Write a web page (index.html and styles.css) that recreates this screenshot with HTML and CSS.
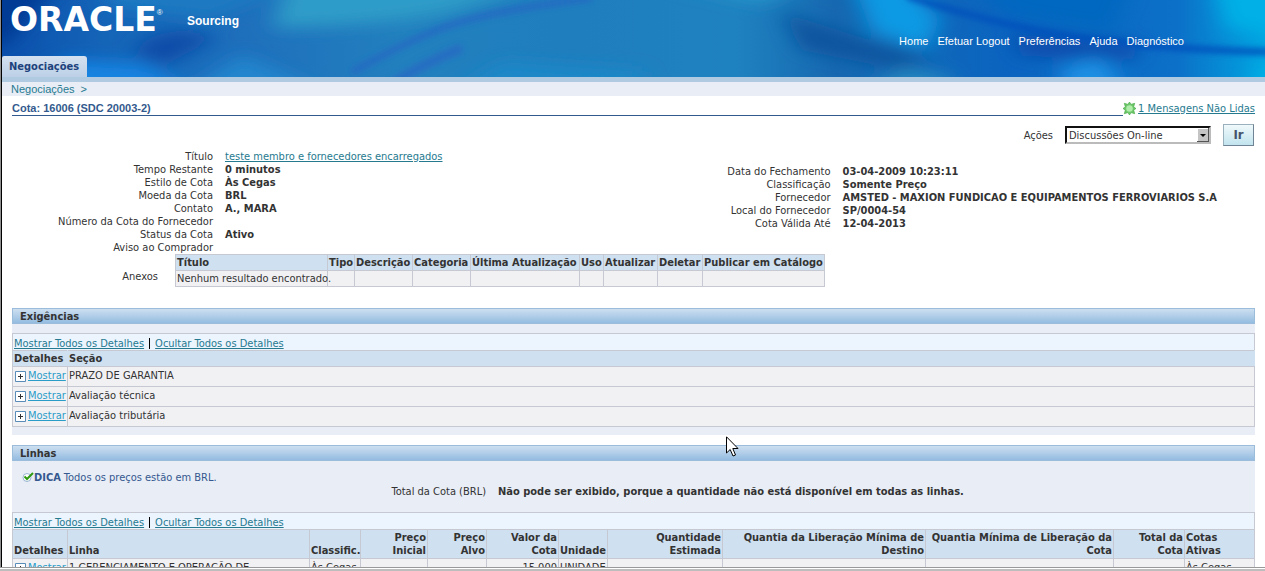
FILE: index.html
```
<!DOCTYPE html>
<html lang="pt-BR">
<head>
<meta charset="utf-8">
<title>Cota: 16006 (SDC 20003-2)</title>
<link rel="stylesheet" href="styles.css">
</head>
<body>
<div class="window">
<div class="viewport">
  <header class="banner">
    <svg class="banner-art" viewBox="0 0 1263 77" preserveAspectRatio="none" aria-hidden="true">
      <defs>
        <linearGradient id="base" x1="0" x2="1" y1="0" y2="0">
          <stop offset="0" stop-color="#0a50ac"/>
          <stop offset=".08" stop-color="#1464b8"/>
          <stop offset=".2" stop-color="#1f70bc"/>
          <stop offset=".32" stop-color="#2280be"/>
          <stop offset=".45" stop-color="#1f7ebe"/>
          <stop offset=".58" stop-color="#1f82c0"/>
          <stop offset=".66" stop-color="#1668b0"/>
          <stop offset=".72" stop-color="#1168b8"/>
          <stop offset=".8" stop-color="#0a64c0"/>
          <stop offset=".93" stop-color="#0c70c8"/>
          <stop offset="1" stop-color="#00a4e0"/>
        </linearGradient>
        <filter id="soft" filterUnits="userSpaceOnUse" x="-60" y="-60" width="1400" height="200"><feGaussianBlur stdDeviation="11 8"/></filter>
        <filter id="fine" filterUnits="userSpaceOnUse" x="-60" y="-60" width="1400" height="200"><feGaussianBlur stdDeviation="3"/></filter>
      </defs>
      <rect width="1263" height="77" fill="url(#base)"/>
      <g filter="url(#soft)">
        <path d="M60 60L140 64L200 95H40Z" fill="#1384e2"/>
        <path d="M130 52Q160 20 215 38L160 66Z" fill="#0c4ca8"/>
        <path d="M100 -20H300L210 18L110 8Z" fill="#1e7ac2"/>
        <path d="M290 -25H560L450 12Q380 26 270 28Z" fill="#2e9cc8"/>
        <path d="M-20 -20H60L5 45H-20Z" fill="#043a94"/>
        <path d="M180 95L240 55L330 95Z" fill="#2486ce"/>
        <path d="M450 95L500 62L640 72V95Z" fill="#1b88c8"/>
        <path d="M640 -25H820L760 4Z" fill="#2896cc"/>
        <path d="M850 -20H905L938 20L925 50L870 32Z" fill="#109ae4"/>
        <path d="M780 12L860 38L930 56L900 70L800 50Z" fill="#0f559f"/>
        <path d="M860 95L900 68L948 76V95Z" fill="#2888c0"/>
        <path d="M965 -20H1130L1110 32L1010 16Z" fill="#0068c0"/>
        <path d="M1060 95L1060 68L1100 55L1125 95Z" fill="#1e90e4"/>
        <path d="M1210 -25H1290V36L1225 28Z" fill="#04b0e6"/>
        <path d="M1245 95L1265 60H1290V95Z" fill="#04b0e6"/>
        <path d="M1010 34L1140 44L1130 60L1020 56Z" fill="#0a4cac"/>
      </g>
      <g filter="url(#fine)" fill="none">
        <path d="M350 72Q400 44 440 28T590 -2" stroke="#2464c4" stroke-width="6" stroke-opacity=".8"/>
        <path d="M390 84Q420 64 460 48" stroke="#2664c4" stroke-width="9" stroke-opacity=".7"/>
        <path d="M905 -4Q1020 33 1110 42T1275 52" stroke="#0450bc" stroke-width="6"/>
      </g>
    </svg>
    <div class="brand">
      <span class="logo">ORACLE<sup class="reg">®</sup></span>
      <span class="product">Sourcing</span>
    </div>
    <nav class="global">
      <a href="#">Home</a><a href="#">Efetuar Logout</a><a href="#">Preferências</a><a href="#">Ajuda</a><a href="#">Diagnóstico</a>
    </nav>
    <a class="tab" href="#">Negociações</a>
  </header>
  <div class="tab-band"></div>
  <nav class="crumbs"><a href="#">Negociações</a><span>&gt;</span></nav>

  <main class="content">
    <div class="title-row">
      <h1>Cota: 16006 (SDC 20003-2)</h1>
      <div class="messages">
        <svg class="burst" viewBox="0 0 12 12" aria-hidden="true">
          <path d="M6 0L7.400 2.200L10.800 1.200L9.800 4.600L12 6L9.800 7.400L10.800 10.800L7.400 9.800L6 12L4.600 9.800L1.200 10.800L2.200 7.400L0 6L2.200 4.600L1.200 1.200L4.600 2.200Z" fill="#6cc868" stroke="#46a846" stroke-width=".6"/>
          <circle cx="6" cy="6" r="3" fill="#b0ecaa"/>
        </svg>
        <a href="#">1 Mensagens Não Lidas</a>
      </div>
    </div>

    <form class="actions">
      <label for="acoes">Ações</label>
      <span class="picker">
        <select id="acoes"><option>Discussões On-line</option></select>
        <svg class="arrow" viewBox="0 0 12 14" aria-hidden="true"><rect width="12" height="14" fill="#c4c4c4"/><path d="M0 14V0H12" fill="none" stroke="#fff" stroke-width="2"/><path d="M12 0V14H0" fill="none" stroke="#555" stroke-width="2"/><path d="M3 6H9L6 9Z" fill="#000"/></svg>
      </span>
      <button type="button">Ir</button>
    </form>

    <div class="fields">
      <dl class="left">
        <dt>Título</dt><dd><a href="#">teste membro e fornecedores encarregados</a></dd>
        <dt>Tempo Restante</dt><dd>0 minutos</dd>
        <dt>Estilo de Cota</dt><dd>Às Cegas</dd>
        <dt>Moeda da Cota</dt><dd>BRL</dd>
        <dt>Contato</dt><dd>A., MARA</dd>
        <dt>Número da Cota do Fornecedor</dt><dd></dd>
        <dt>Status da Cota</dt><dd>Ativo</dd>
        <dt>Aviso ao Comprador</dt><dd></dd>
      </dl>
      <dl class="right">
        <dt>Data do Fechamento</dt><dd>03-04-2009 10:23:11</dd>
        <dt>Classificação</dt><dd>Somente Preço</dd>
        <dt>Fornecedor</dt><dd>AMSTED - MAXION FUNDICAO E EQUIPAMENTOS FERROVIARIOS S.A</dd>
        <dt>Local do Fornecedor</dt><dd>SP/0004-54</dd>
        <dt>Cota Válida Até</dt><dd>12-04-2013</dd>
      </dl>
    </div>

    <div class="attachments">
      <span class="att-label" id="anexos">Anexos</span>
      <table class="grid att" aria-labelledby="anexos">
        <colgroup><col class="a1"><col class="a2"><col class="a3"><col class="a3"><col class="a5"><col class="a6"><col class="a7"><col class="a8"><col class="a9"></colgroup>
        <thead><tr><th>Título</th><th>Tipo</th><th>Descrição</th><th>Categoria</th><th>Última Atualização</th><th>Uso</th><th>Atualizar</th><th>Deletar</th><th>Publicar em Catálogo</th></tr></thead>
        <tbody><tr><td>Nenhum resultado encontrado.</td><td></td><td></td><td></td><td></td><td></td><td></td><td></td><td></td></tr></tbody>
      </table>
    </div>

    <section class="panel">
      <h2>Exigências</h2>
      <div class="toolbar"><a href="#">Mostrar Todos os Detalhes</a><i class="sep"></i><a href="#">Ocultar Todos os Detalhes</a></div>
      <table class="grid req">
        <colgroup><col class="details"><col></colgroup>
        <thead><tr><th>Detalhes</th><th>Seção</th></tr></thead>
        <tbody>
          <tr><td><a class="show" href="#"><svg class="plus" viewBox="0 0 11 11" aria-hidden="true"><path d="M.5.5H10.500V10.500H.5Z" fill="#fff" stroke="#5a8cb8"/><path d="M3 5.500H8M5.500 3V8" stroke="#333"/></svg><span>Mostrar</span></a></td><td>PRAZO DE GARANTIA</td></tr>
          <tr><td><a class="show" href="#"><svg class="plus" viewBox="0 0 11 11" aria-hidden="true"><path d="M.5.5H10.500V10.500H.5Z" fill="#fff" stroke="#5a8cb8"/><path d="M3 5.500H8M5.500 3V8" stroke="#333"/></svg><span>Mostrar</span></a></td><td>Avaliação técnica</td></tr>
          <tr><td><a class="show" href="#"><svg class="plus" viewBox="0 0 11 11" aria-hidden="true"><path d="M.5.5H10.500V10.500H.5Z" fill="#fff" stroke="#5a8cb8"/><path d="M3 5.500H8M5.500 3V8" stroke="#333"/></svg><span>Mostrar</span></a></td><td>Avaliação tributária</td></tr>
        </tbody>
      </table>
    </section>

    <section class="panel">
      <h2>Linhas</h2>
      <p class="tip">
        <svg class="check" viewBox="0 0 12 10" aria-hidden="true"><circle cx="5" cy="5.500" r="4" fill="#fff" stroke="#9ab4d4"/><path d="M2.500 4.500L5 7L11 1" fill="none" stroke="#2f9a10" stroke-width="2"/></svg>
        <b>DICA</b> Todos os preços estão em BRL.
      </p>
      <dl class="total"><dt>Total da Cota (BRL)</dt><dd>Não pode ser exibido, porque a quantidade não está disponível em todas as linhas.</dd></dl>
      <div class="toolbar"><a href="#">Mostrar Todos os Detalhes</a><i class="sep"></i><a href="#">Ocultar Todos os Detalhes</a></div>
      <table class="grid lines">
        <colgroup><col class="details"><col><col class="l3"><col class="l4"><col class="l5"><col class="l6"><col class="l7"><col class="l8"><col class="l9"><col class="l10"><col class="l11"><col class="l12"></colgroup>
        <thead><tr><th>Detalhes</th><th>Linha</th><th>Classific.</th><th class="num">Preço<br>Inicial</th><th class="num">Preço<br>Alvo</th><th class="num">Valor da<br>Cota</th><th>Unidade</th><th class="num">Quantidade<br>Estimada</th><th class="num">Quantia da Liberação Mínima de<br>Destino</th><th class="num">Quantia Mínima de Liberação da<br>Cota</th><th class="num">Total da<br>Cota</th><th>Cotas<br>Ativas</th></tr></thead>
        <tbody><tr><td><a class="show" href="#"><svg class="plus" viewBox="0 0 11 11" aria-hidden="true"><path d="M.5.5H10.500V10.500H.5Z" fill="#fff" stroke="#5a8cb8"/><path d="M3 5.500H8M5.500 3V8" stroke="#333"/></svg><span>Mostrar</span></a></td><td>1 GERENCIAMENTO E OPERAÇÃO DE</td><td>Às Cegas</td><td></td><td></td><td class="num">15.000</td><td>UNIDADE</td><td></td><td></td><td></td><td></td><td>Às Cegas</td></tr></tbody>
      </table>
    </section>
  </main>
</div>
<div class="frame-edge"></div>
</div>
<svg class="pointer" viewBox="0 0 13 21" aria-hidden="true"><path d="M.5.8V17L4.200 13.500L7 20L9.500 19L6.800 12.500H12Z" fill="#fff" stroke="#000"/></svg>
</body>
</html>
```
FILE: styles.css
```
* { box-sizing: border-box; }
body {
  margin: 0;
  background: #fff;
  color: #333;
  font: 11px/13px "DejaVu Sans Condensed", "DejaVu Sans", sans-serif;
}
a { color: #267a90; }
h1, h2, dl, dd, p { margin: 0; }

.window {
  display: flex;
  flex-direction: column;
  height: 100vh;
  overflow: hidden;
  background: linear-gradient(to right, #909090 1px, #fff 1px);
}
.viewport {
  flex: 1;
  min-height: 0;
  margin-left: 1px;
  overflow: hidden;
  border-left: 1px solid #000;
}
.frame-edge {
  height: 4px;
  border-top: 1px solid #999;
  border-bottom: 2px solid #bdbdbd;
  background: #fff;
}

/* Banner */
.banner {
  position: relative;
  display: grid;
  grid-template-columns: 1fr auto;
  grid-template-rows: 56px 21px;
}
.banner-art { position: absolute; width: 100%; height: 100%; }
.brand, .global, .tab { position: relative; }
.brand { display: flex; align-items: flex-start; color: #fff; padding-left: 8px; }
.logo { width: 177px; font: bold 33px/40px "DejaVu Sans", sans-serif; white-space: nowrap; }
.reg { font: 8px/8px "Liberation Sans", sans-serif; vertical-align: 16px; }
.product { font: bold 12px/14px "Liberation Sans", sans-serif; padding-top: 14px; }
.global {
  display: flex;
  gap: 9px;
  padding: 35px 81px 0 0;
  font: 11px/13px "Liberation Sans", sans-serif;
}
.global a { color: #fff; text-decoration: none; }
.tab {
  justify-self: start;
  padding: 4px 8px 4px 7px;
  border-radius: 2px 3px 0 0;
  background: linear-gradient(#d4e1f0, #bcd0e6);
  color: #20427c;
  font-weight: bold;
  text-decoration: none;
}
.tab-band { height: 5px; background: #b0cae1; }
.crumbs {
  display: flex;
  gap: 6px;
  height: 14px;
  padding-left: 9px;
  background: #e8edf6;
  color: #267a90;
  font: 11px/14px "Liberation Sans", sans-serif;
}
.crumbs a { text-decoration: none; }

.content { padding: 5px 10px 0; }

/* Title and actions */
.title-row { display: flex; align-items: flex-start; }
h1 {
  flex: 1;
  height: 15px;
  border-bottom: 1px solid #335a8e;
  color: #335a8e;
  font: bold 11px/14px "Liberation Sans", sans-serif;
}
.messages { display: flex; align-items: center; gap: 2px; padding: 1px 0 0; }
.burst { width: 13px; height: 13px; }
.actions {
  display: flex;
  align-items: center;
  justify-content: flex-end;
  gap: 12px;
  padding: 8px 1px 0 0;
}
.picker { position: relative; width: 146px; height: 18px; }
select {
  width: 100%;
  height: 18px;
  padding: 0 2px;
  appearance: none;
  border: 2px solid #000;
  border-color: #111 #bbb #bbb #111;
  border-radius: 0;
  background: #fff;
  color: #333;
  font: inherit;
}
.arrow { position: absolute; right: 2px; top: 2px; width: 12px; height: 14px; pointer-events: none; }
button {
  width: 31px;
  height: 22px;
  padding: 0;
  border: 1px solid #9ab0bc;
  border-right-color: #6f8494;
  border-bottom-color: #6f8494;
  background: linear-gradient(#f0f9fb, #c2e4ee);
  color: #46536a;
  font: bold 13px/16px "DejaVu Sans Condensed", sans-serif;
}

/* Header fields */
.fields { display: grid; grid-template-columns: 1fr 1fr; padding-top: 4px; }
.fields dl, .total { display: grid; column-gap: 12px; }
.left { grid-template-columns: 201px 1fr; }
.right { grid-template-columns: 197px 1fr; align-content: start; padding-top: 15px; }
dt { text-align: right; }
dd { min-height: 13px; font-weight: bold; white-space: nowrap; }
dd a { font-weight: normal; }
.attachments { display: flex; align-items: center; }
.att-label { width: 163px; padding: 12px 17px 0 0; text-align: right; }

/* Tables */
.grid { border-collapse: collapse; table-layout: fixed; }
.grid th, .grid td {
  padding: 1px;
  border: 1px solid #c6c9d2;
  text-align: left;
  white-space: nowrap;
}
.grid th { background: #cfe0f0; vertical-align: bottom; }
.grid td { background: #f1f1f4; vertical-align: top; }
.grid th.num, .grid td.num { text-align: right; }
.att { width: 650px; }
.a1 { width: 152px; }
.a2 { width: 27px; }
.a3 { width: 58px; }
.a5 { width: 109px; }
.a6 { width: 24px; }
.a7 { width: 54px; }
.a8 { width: 45px; }
.a9 { width: 122px; }
.req, .lines { width: 100%; }
.details { width: 55px; }
.l3 { width: 51px; }
.l4 { width: 67px; }
.l5 { width: 59px; }
.l6 { width: 72px; }
.l7 { width: 49px; }
.l8 { width: 115px; }
.l9 { width: 203px; }
.l10 { width: 188px; }
.l11 { width: 71px; }
.l12 { width: 70px; }
.req tbody td, .lines tbody td { height: 20px; padding-top: 2px; }
.req thead th { border-right-color: #cfe0f0; }

/* Panels */
.panel { margin-top: 10px; padding-bottom: 8px; background: #e8edf6; }
.attachments + .panel { margin-top: 21px; }
h2 {
  height: 16px;
  padding-left: 7px;
  border: 1px solid #9cbcdc;
  background: linear-gradient(#cddff0, #94bce0);
  font: bold 11px/16px "DejaVu Sans Condensed", sans-serif;
}
.toolbar {
  display: flex;
  align-items: center;
  height: 17px;
  margin-top: 9px;
  padding: 2px 1px 0;
  border: 1px solid #c6c9d2;
  border-bottom: 0;
  background: #ecf4fe;
}
.sep { width: 1px; height: 11px; margin: 0 5px; background: #000; }
.show { display: flex; gap: 2px; color: #2a9cc8; }
.plus { width: 11px; height: 11px; margin: 2px 0 0 1px; flex: none; }
.tip { display: flex; gap: 3px; padding: 10px 10px 0; color: #35588f; }
.check { width: 12px; height: 10px; margin: 1px -3px 0 0; }
.total { grid-template-columns: 474px 1fr; padding-top: 1px; }
.total + .toolbar { margin-top: 14px; }

/* Mouse pointer over the page */
.pointer { position: absolute; left: 726px; top: 436px; width: 13px; height: 21px; }
```
